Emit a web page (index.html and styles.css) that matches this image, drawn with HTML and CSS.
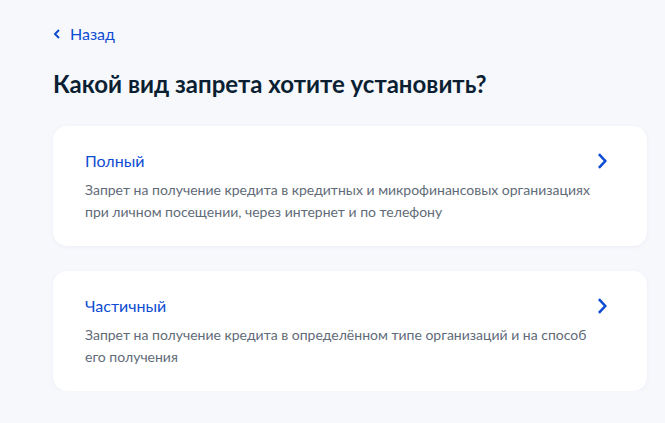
FILE: index.html
```html
<!DOCTYPE html>
<html lang="ru">
<head>
<meta charset="utf-8">
<link rel="stylesheet" href="styles.css">
</head>
<body>
<main class="page">
  <a class="back" href="#">
    <svg class="back-icon" width="8" height="10" viewBox="0 0 8 10"><path d="M6 1 L2 5 L6 9" fill="none" stroke="#0d4cd3" stroke-width="2"/></svg>
    <span>Назад</span>
  </a>
  <h1 class="title">Какой вид запрета хотите установить?</h1>
  <div class="cards">
    <a class="card" href="#">
      <div class="card-body">
        <div class="card-title">Полный</div>
        <div class="card-text">Запрет на получение кредита в кредитных и микрофинансовых организациях при личном посещении, через интернет и по телефону</div>
      </div>
      <svg class="chev" width="12" height="18" viewBox="0 0 12 18"><path d="M3 2 L9.5 9 L3 16" fill="none" stroke="#0d4cd3" stroke-width="2.6"/></svg>
    </a>
    <a class="card" href="#">
      <div class="card-body">
        <div class="card-title">Частичный</div>
        <div class="card-text">Запрет на получение кредита в определённом типе организаций и на способ его получения</div>
      </div>
      <svg class="chev" width="12" height="18" viewBox="0 0 12 18"><path d="M3 2 L9.5 9 L3 16" fill="none" stroke="#0d4cd3" stroke-width="2.6"/></svg>
    </a>
  </div>
</main>
</body>
</html>
```
FILE: styles.css
```css
html, body {
  margin: 0;
  padding: 0;
  background: #f6f8fc;
  font-family: Lato, "Noto Sans", sans-serif;
}
.page {
  padding: 24px 18px 0 53px;
  width: 594px;
}
.back {
  display: flex;
  align-items: center;
  gap: 9px;
  color: #0d4cd3;
  text-decoration: none;
  font-size: 16px;
  line-height: 20px;
  height: 20px;
}
.back-icon { display: block; }
.title {
  margin: 25px 0 0;
  font-size: 24px;
  line-height: 30px;
  font-weight: 700;
  color: #0b1f33;
}
.cards {
  margin-top: 27px;
  display: flex;
  flex-direction: column;
  gap: 25px;
}
.card {
  display: flex;
  align-items: flex-start;
  justify-content: space-between;
  background: #fff;
  border-radius: 14px;
  box-shadow: 0 1px 4px rgba(60, 90, 140, 0.06);
  padding: 25px 39px 23px 32px;
  text-decoration: none;
}
.card-title {
  color: #0d4cd3;
  font-size: 16px;
  line-height: 20px;
}
.card-text {
  margin-top: 8px;
  color: #5f6b78;
  font-size: 14px;
  line-height: 22px;
  max-width: 525px;
}
.chev {
  display: block;
  margin-top: 1px;
}
```
